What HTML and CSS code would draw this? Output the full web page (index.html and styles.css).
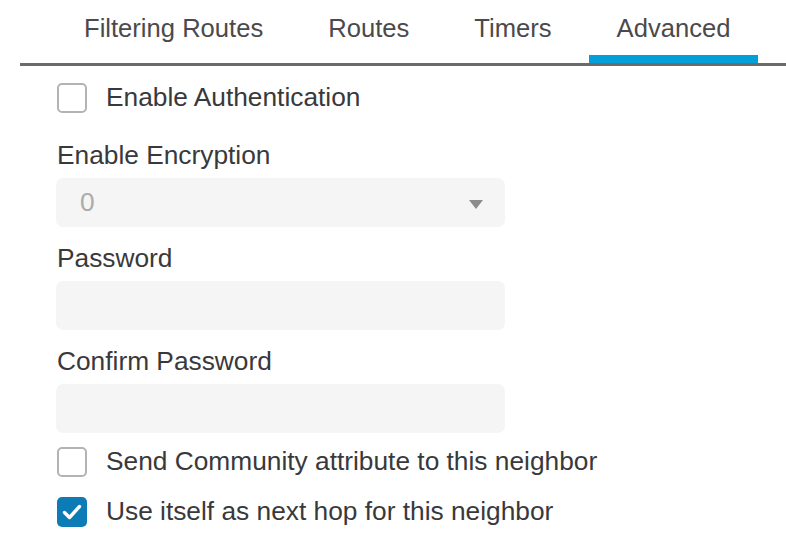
FILE: index.html
```html
<!DOCTYPE html>
<html lang="en">
<head>
<meta charset="utf-8">
<title>Advanced</title>
<link rel="stylesheet" href="styles.css">
</head>
<body>
<nav class="tabs">
  <div class="tab">Filtering Routes</div>
  <div class="tab">Routes</div>
  <div class="tab">Timers</div>
  <div class="tab active">Advanced</div>
</nav>
<form class="form">
  <label class="check-row first">
    <span class="box"></span>
    <span class="check-text">Enable Authentication</span>
  </label>
  <div class="field first-field">
    <div class="label">Enable Encryption</div>
    <div class="control select">
      <span class="value">0</span>
      <span class="caret"></span>
    </div>
  </div>
  <div class="field">
    <div class="label">Password</div>
    <div class="control"></div>
  </div>
  <div class="field">
    <div class="label">Confirm Password</div>
    <div class="control"></div>
  </div>
  <label class="check-row second">
    <span class="box"></span>
    <span class="check-text">Send Community attribute to this neighbor</span>
  </label>
  <label class="check-row third">
    <span class="box checked">
      <svg width="30" height="30" viewBox="0 0 30 30"><polyline points="7.5,15.5 12.5,20.5 22.5,9.5" fill="none" stroke="#fff" stroke-width="3.4" stroke-linecap="round" stroke-linejoin="round"/></svg>
    </span>
    <span class="check-text">Use itself as next hop for this neighbor</span>
  </label>
</form>
</body>
</html>
```

FILE: styles.css
```css
* { box-sizing: border-box; }
html, body { margin: 0; padding: 0; background: #fff; }
body {
  font-family: "Liberation Sans", Arial, sans-serif;
  font-size: 26.3px;
  color: #39393b;
  width: 786px;
  height: 546px;
  overflow: hidden;
}
.tabs {
  display: flex;
  gap: 9px;
  margin-left: 20px;
  padding-left: 36px;
  border-bottom: 3px solid #6b6b6b;
  height: 66px;
  font-size: 25.6px;
}
.tab {
  padding: 13px 28px 0;
  line-height: 30px;
  color: #4a4a4c;
  height: 63px;
  border-bottom: 8px solid transparent;
}
.tab.active {
  border-bottom-color: #049fd9;
}
.form {
  padding-left: 57px;
  display: flex;
  flex-direction: column;
}
.check-row {
  display: flex;
  align-items: center;
  gap: 19px;
  height: 30px;
}
.check-row.first { margin-top: 17px; }
.check-row.second { margin-top: 14px; }
.check-row.third { margin-top: 20px; }
.box {
  width: 30px;
  height: 30px;
  border: 2px solid #b3b3b3;
  border-radius: 5px;
  flex: none;
  display: block;
}
.box.checked {
  background: #0d7cb6;
  border: none;
}
.box svg { display: block; }
.check-text { line-height: 30px; margin-top: -2px; }
.field { margin-top: 17px; }
.field.first-field { margin-top: 28px; }
.label {
  line-height: 30px;
  margin-bottom: 8px;
  margin-top: -1px;
}
.control {
  width: 449px;
  height: 49px;
  background: #f5f5f5;
  border-radius: 7px;
  margin-left: -1px;
}
.select {
  display: flex;
  align-items: center;
  justify-content: space-between;
  padding: 0 22px 0 24px;
}
.value { color: #ababab; line-height: 30px; margin-top: -2px; }
.caret {
  width: 0;
  height: 0;
  border-left: 7px solid transparent;
  border-right: 7px solid transparent;
  border-top: 9px solid #8c8c8c;
  margin-top: 4px;
}
```
